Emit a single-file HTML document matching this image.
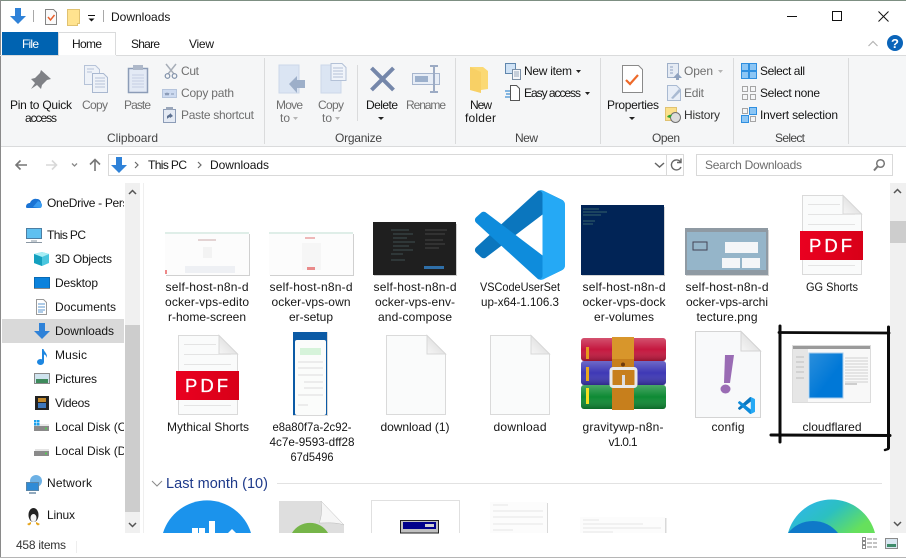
<!DOCTYPE html>
<html><head><meta charset="utf-8"><title>Downloads</title>
<style>
html,body{margin:0;padding:0;background:#fff;width:906px;height:558px;overflow:hidden}
svg{display:block;position:absolute;left:0;top:0}
text{font-family:"Liberation Sans",sans-serif;font-size:12px;fill:#151515}
.m{text-anchor:middle}
.g{fill:#6f6f6f}
.b{fill:#444}
</style></head><body>
<svg width="906" height="558" viewBox="0 0 906 558" xmlns="http://www.w3.org/2000/svg">
<defs>
<clipPath id="nav"><rect x="0" y="183" width="124" height="350"/></clipPath>
<clipPath id="main"><rect x="144" y="183" width="746" height="350"/></clipPath>
<linearGradient id="ed" x1="0" y1="0" x2="1" y2="0.5"><stop offset="0" stop-color="#2fb4f5"/><stop offset=".55" stop-color="#2cc0c0"/><stop offset="1" stop-color="#66e05c"/></linearGradient>
<linearGradient id="blue" x1="0" y1="0" x2="1" y2="1"><stop offset="0" stop-color="#2b8fdc"/><stop offset=".6" stop-color="#0078d7"/></linearGradient>
<linearGradient id="fold" x1="0" y1="1" x2="1" y2="0"><stop offset="0" stop-color="#f6f6f6"/><stop offset="1" stop-color="#d4d4d4"/></linearGradient>
<linearGradient id="red" x1="0" y1="0" x2="1" y2="0"><stop offset="0" stop-color="#ea0020"/><stop offset="1" stop-color="#d80018"/></linearGradient>
<linearGradient id="shade" x1="0" y1="0" x2="0" y2="1"><stop offset="0" stop-color="#fff" stop-opacity=".25"/><stop offset=".5" stop-color="#fff" stop-opacity="0"/><stop offset="1" stop-color="#000" stop-opacity=".25"/></linearGradient>
<g id="arrow"><path d="M5 0h6v8h5l-8 8-8-8h5z" fill="#2f82d8"/></g>
<g id="vsc">
<path d="M96.46 10.8L75.86.88C73.47-.27 70.62.21 68.75 2.08L1.3 63.58c-1.81 1.66-1.81 4.51.01 6.17l5.5 5c1.49 1.35 3.72 1.45 5.32.24L93.36 13.37C96.09 11.3 100 13.25 100 16.67v-.24c0-2.4-1.38-4.59-3.54-5.63z" fill="#0b76be"/>
<path d="M96.46 89.2L75.86 99.12c-2.39 1.15-5.24.67-7.11-1.2L1.3 36.42c-1.81-1.66-1.81-4.51.01-6.17l5.5-5c1.49-1.35 3.72-1.45 5.32-.24l81.23 61.62c2.73 2.07 6.64.12 6.64-3.3v.24c0 2.4-1.38 4.59-3.54 5.63z" fill="#0e8cdc"/>
<path d="M75.86 99.13c-2.39 1.15-5.24.66-7.11-1.21C71.06 100.22 75 98.59 75 95.33V4.67c0-3.26-3.94-4.89-6.25-2.59 1.87-1.87 4.72-2.35 7.11-1.21l20.6 9.91C98.62 11.82 100 14.01 100 16.41v67.18c0 2.4-1.38 4.59-3.54 5.63z" fill="#25a9f5"/>
</g>
<g id="doc">
<path d="M.5.5H41L59.5 19V79.5H.5z" fill="#fafbfb" stroke="#dadada"/>
<path d="M41 .5V19H59.5z" fill="url(#fold)" stroke="#d8d8d8"/>
</g>
<g id="pdf">
<use href="#doc"/>
<path d="M6 9.5h32M6 19.500h47M6 29.500h47M6 70.500h47" stroke="#e4e4e4" fill="none"/>
<rect x="-2" y="36" width="63" height="29" fill="url(#red)"/>
<text x="30" y="57" class="m" style="font-size:18.500px;fill:#fff;letter-spacing:3px;stroke:#fff;stroke-width:.3px">PDF</text>
</g>
<g id="chev"><path d="M0 0l3 3-3 3" fill="none" stroke="#6a6a6a" stroke-width="1.2"/></g>
</defs>

<!-- window frame -->
<rect width="906" height="558" fill="#fff"/>
<rect x="0" y="0" width="906" height="1" fill="#7d8f82"/>
<rect x="0" y="0" width="1" height="558" fill="#8a8a8a"/>
<rect x="0" y="557" width="906" height="1" fill="#b5b5b5"/>

<!-- title bar -->
<use href="#arrow" x="10" y="8"/>
<rect x="33" y="10" width="1" height="12" fill="#a8a8a8"/>
<path d="M45.500 9.500h8l3 3v12h-11z" fill="#fafafa" stroke="#858585"/>
<path d="M48 17l2.500 3 4-5" fill="none" stroke="#e8602c" stroke-width="1.500"/>
<path d="M67.500 9.500h12v14h-2v2h-10z" fill="#ffe38f" stroke="#e0c271"/>
<path d="M88.500 18.500h6l-3 3z" fill="#111" stroke="none"/>
<rect x="88" y="15" width="7" height="1" fill="#111"/>
<rect x="103" y="10" width="1" height="12" fill="#a8a8a8"/>
<text x="111" y="21">Downloads</text>
<rect x="787" y="16" width="10" height="1" fill="#111"/>
<rect x="832.500" y="11.500" width="9" height="9" fill="none" stroke="#111"/>
<path d="M878.500 11.500l10 10M888.500 11.500l-10 10" stroke="#111" fill="none"/>

<!-- tabs -->
<rect x="2" y="32" width="56" height="23" fill="#0063b1"/>
<text x="30.500" y="48" class="m" style="fill:#fff" textLength="17">File</text>
<rect x="0" y="55" width="906" height="1" fill="#dadbdc"/>
<path d="M58.500 55.500v-23h57v23" fill="#fff" stroke="#dadbdc"/>
<rect x="59" y="55" width="57" height="2" fill="#f5f6f7"/>
<text x="87" y="48" class="m" textLength="30">Home</text>
<text x="131" y="48" textLength="29">Share</text>
<text x="189" y="48" textLength="25">View</text>
<path d="M868.500 46l4.500-4.500 4.500 4.500" stroke="#b5b5b5" stroke-width="1.200" fill="none"/>
<circle cx="895" cy="43" r="8" fill="#0a64b9"/>
<text x="895" y="48" class="m" style="fill:#fff;font-weight:700;font-size:13px">?</text>

<!-- ribbon -->
<rect x="1" y="56" width="905" height="90" fill="#f5f6f7"/>
<rect x="1" y="146" width="905" height="1" fill="#dadbdc"/>
<g fill="#dadbdc">
<rect x="264" y="58" width="1" height="86"/><rect x="455" y="58" width="1" height="86"/><rect x="600" y="58" width="1" height="86"/><rect x="733" y="58" width="1" height="86"/><rect x="848" y="58" width="1" height="86"/><rect x="357" y="65" width="1" height="56"/>
</g>
<!-- pin -->
<path d="M41 70l10 9-4 1-5 5-1 4-4-4-6 4 4-6-4-4 4-1 5-5z" fill="#7f8186"/>
<!-- copy -->
<path d="M84.500 65.500h11l4 4v15h-15z" fill="#eef2f8" stroke="#b6c3d8"/>
<path d="M92.500 73.500h11l4 4v15h-15z" fill="#eef2f8" stroke="#a9b8d0"/>
<path d="M87 69h7M87 72h5M95 78h10M95 81h10M95 84h10M95 87h10" stroke="#b6c3d8"/>
<!-- paste -->
<rect x="128.500" y="68.500" width="19" height="24" fill="#e3eaf5" stroke="#8c9cb7" stroke-width="1.500"/>
<rect x="133" y="65" width="10" height="5" fill="#aeb8c9"/>
<path d="M132 75h12M132 78h12M132 81h12M132 84h12M132 87h12" stroke="#c4cfe2"/>
<!-- cut -->
<path d="M166 64l8 10M176 64l-8 10" stroke="#a7aeb8" stroke-width="1.500" fill="none"/>
<circle cx="167.500" cy="76" r="2.300" fill="none" stroke="#7e8fa8" stroke-width="1.200"/>
<circle cx="174.500" cy="76" r="2.300" fill="none" stroke="#7e8fa8" stroke-width="1.200"/>
<!-- copy path -->
<rect x="162.500" y="89.500" width="14" height="8" fill="#cddaf0" stroke="#b5c4dc"/>
<path d="M165 93l1 2 1-2 1 2 1-2M171 94h3" stroke="#6d7f9d" fill="none" stroke-width=".8"/>
<!-- paste shortcut -->
<rect x="163.500" y="109.500" width="12" height="13" fill="#e4eaf4" stroke="#8c9cb7"/>
<rect x="166" y="107" width="7" height="3" fill="#9aa6ba"/>
<path d="M167 119v-3l3-2v-1l3 3-3 2v-1l-2 1z" fill="#5d7191"/>
<text x="41" y="109" class="m" textLength="62">Pin to Quick</text>
<text x="41" y="122" class="m" textLength="32">access</text>
<text x="95" y="109" class="m g" textLength="26">Copy</text>
<text x="137.500" y="109" class="m g" textLength="27">Paste</text>
<text x="181" y="75" class="g" textLength="18">Cut</text>
<text x="181" y="97" class="g" textLength="53">Copy path</text>
<text x="181" y="119" class="g" textLength="73">Paste shortcut</text>
<text x="132.500" y="142" class="m b" textLength="51">Clipboard</text>

<!-- move to -->
<path d="M279 65h20v28h-20z" fill="#dbe5f3" stroke="#ccd8ea"/>
<path d="M289 84l8-8v4h8v8h-8v5z" fill="#9dafc9"/>
<text x="289.500" y="109" class="m g" textLength="27">Move</text>
<text x="280" y="122" class="g">to</text>
<path d="M293 117h5l-2.500 3z" fill="#b5b5b5"/>
<!-- copy to -->
<path d="M321 65h20v28h-20z" fill="#dbe5f3" stroke="#ccd8ea"/>
<path d="M331 63.500h11l4 4v13h-15z" fill="#f0f4fa" stroke="#b3c1d7"/>
<path d="M333 68h10M333 71h10M333 74h10M333 77h10" stroke="#b3c1d7"/>
<text x="331" y="109" class="m g" textLength="26">Copy</text>
<text x="322" y="122" class="g">to</text>
<path d="M335 117h5l-2.500 3z" fill="#b5b5b5"/>
<!-- delete -->
<path d="M371.500 68l22 22M393.500 68l-22 22" stroke="#7587aa" stroke-width="4" fill="none"/>
<text x="382" y="109" class="m" textLength="32">Delete</text>
<path d="M378 117h6l-3 3z" fill="#222"/>
<!-- rename -->
<rect x="412.500" y="73.500" width="27" height="11" fill="#e7edf6" stroke="#a6b5cd"/>
<rect x="415" y="76" width="13" height="6" fill="#9cb0cc"/>
<path d="M430 66h8M434 66v26M430 92h8" stroke="#9cabc4" stroke-width="2" fill="none"/>
<text x="426" y="109" class="m g" textLength="40">Rename</text>
<text x="358.500" y="142" class="m b" textLength="47">Organize</text>

<!-- new folder -->
<path d="M470 67h13l5 4v18l-7 1v3l-11-3z" fill="#fbd974"/>
<path d="M470 67l11 5v21l-11-3z" fill="#f7c95c" opacity=".6"/>
<text x="481" y="109" class="m" textLength="22">New</text>
<text x="480.500" y="122" class="m" textLength="31">folder</text>
<!-- new item -->
<rect x="505.500" y="63.500" width="10" height="10" fill="#cfe2f5" stroke="#5f86ad"/>
<rect x="512.500" y="69.500" width="8" height="10" fill="#f4f6fa" stroke="#7b8fa6"/>
<path d="M514 72h5M514 74h5M514 76h5" stroke="#96a7bb"/>
<text x="524" y="75" textLength="48">New item</text>
<path d="M576 70h5l-2.500 3z" fill="#222"/>
<!-- easy access -->
<path d="M510.500 85.500h6l3 3v12h-9z" fill="#fff" stroke="#555"/>
<path d="M505 91h5M506 94h4M505 97h5" stroke="#1577c9"/>
<text x="524" y="97" textLength="57">Easy access</text>
<path d="M585 92h5l-2.500 3z" fill="#222"/>
<text x="526.500" y="142" class="m b" textLength="23">New</text>

<!-- properties -->
<path d="M622.500 65.500h16l4 4v23h-20z" fill="#fff" stroke="#8a8a8a"/>
<path d="M626 80l4 4 8-9" fill="none" stroke="#ee6a2a" stroke-width="2.200"/>
<text x="633" y="109" class="m" textLength="52">Properties</text>
<path d="M629 117h6l-3 3z" fill="#222"/>
<!-- open -->
<rect x="667.500" y="63.500" width="11" height="14" fill="#e5ebf4" stroke="#9fb0c9"/>
<path d="M670 67h3M670 70h3M670 73h3" stroke="#8fa2bf"/>
<path d="M673 78l4.500-5 4.500 5h-3v2h-3v-2z" fill="#8fa2bf"/>
<text x="684" y="75" class="g" textLength="29">Open</text>
<path d="M718 70h5l-2.500 3z" fill="#b5b5b5"/>
<!-- edit -->
<path d="M667.500 85.500h9l4 4v11h-13z" fill="#e8eef7" stroke="#a9bad2"/>
<path d="M671 98l8-9 2 2-8 8z" fill="#a9bad2"/>
<text x="684" y="97" class="g" textLength="20">Edit</text>
<!-- history -->
<rect x="665.500" y="107.500" width="11" height="13" fill="#fbe08b" stroke="#e0c271"/>
<circle cx="675.500" cy="117.500" r="5" fill="#dcdcdc" stroke="#707070"/>
<path d="M667 117a4 4 0 0 1 5-2l-2 3z" fill="#2fa52f"/>
<text x="684" y="119" style="fill:#333" textLength="36">History</text>
<text x="666" y="142" class="m b" textLength="28">Open</text>

<!-- select -->
<g fill="#8cc6f5" stroke="#2f8fe0">
<rect x="741.500" y="63.500" width="7" height="7"/><rect x="749.500" y="63.500" width="7" height="7"/><rect x="741.500" y="71.500" width="7" height="7"/><rect x="749.500" y="71.500" width="7" height="7"/>
</g>
<g fill="none" stroke="#a5a5a5">
<rect x="742.500" y="86.500" width="5" height="5"/><rect x="750.500" y="86.500" width="5" height="5"/><rect x="742.500" y="94.500" width="5" height="5"/><rect x="750.500" y="94.500" width="5" height="5"/>
<rect x="742.500" y="108.500" width="5" height="5"/><rect x="750.500" y="116.500" width="5" height="5"/>
</g>
<g fill="#8cc6f5" stroke="#2f8fe0">
<rect x="749.500" y="107.500" width="7" height="7"/><rect x="741.500" y="115.500" width="7" height="7"/>
</g>
<text x="760" y="75" textLength="45">Select all</text>
<text x="760" y="97" textLength="60">Select none</text>
<text x="760" y="119" textLength="78">Invert selection</text>
<text x="790" y="142" class="m b" textLength="30">Select</text>

<!-- nav row -->
<path d="M27 165H16M20.500 160.500L16 165l4.500 4.500" fill="none" stroke="#777" stroke-width="1.600"/>
<path d="M46 165h10M52 160.500l4.500 4.500-4.500 4.500" fill="none" stroke="#d8d8d8" stroke-width="1.600"/>
<path d="M72 163.500l2.500 2.500 2.500-2.500" fill="none" stroke="#888" stroke-width="1.300"/>
<path d="M95 171v-11M90 164.500l5-5 5 5" fill="none" stroke="#777" stroke-width="1.600"/>
<rect x="108.500" y="154.500" width="575" height="21" fill="#fff" stroke="#d9d9d9"/>
<rect x="666" y="155" width="1" height="20" fill="#d9d9d9"/>
<use href="#arrow" x="111" y="157"/>
<use href="#chev" x="135" y="162"/>
<text x="148" y="169" textLength="39">This PC</text>
<use href="#chev" x="198" y="162"/>
<text x="210" y="169" textLength="59">Downloads</text>
<path d="M655 163l4.500 4 4.500-4" fill="none" stroke="#666" stroke-width="1.500"/>
<path d="M680.500 162a5 5 0 1 0 .5 5M681 158.500v4h-4" fill="none" stroke="#666" stroke-width="1.400"/>
<rect x="696.500" y="154.500" width="196" height="21" fill="#fff" stroke="#d9d9d9"/>
<text x="705" y="169" style="fill:#6d6d6d" textLength="97">Search Downloads</text>
<circle cx="880.500" cy="163.500" r="3.800" fill="none" stroke="#777" stroke-width="1.500"/>
<path d="M877.500 166.500l-3.500 4" stroke="#777" stroke-width="2" fill="none"/>

<!-- nav pane -->
<rect x="2" y="319" width="122" height="24" fill="#d9d9d9"/>
<rect x="125" y="183" width="15" height="350" fill="#f0f0f0"/>
<rect x="125" y="325" width="15" height="187" fill="#cdcdcd"/>
<path d="M129 194l3.500-3.500 3.500 3.500" fill="none" stroke="#555" stroke-width="1.500"/>
<path d="M129 523l3.500 3.500 3.500-3.500" fill="none" stroke="#555" stroke-width="1.500"/>
<rect x="143" y="183" width="1" height="350" fill="#efefef"/>

<!-- onedrive -->
<path d="M26 207c0-3 2-4 4-4 1-3 4-5 7-4 2 0 3 1 4 3 0 0 1 6-1 6H28c-1 0-2 0-2-1z" fill="#1a73d4"/>
<path d="M33 207l5-6c2 1 4 2 4 4s-1 3-2 3z" fill="#3a9cf0"/>
<!-- this pc -->
<rect x="26.500" y="228.500" width="15" height="10" fill="#5fc0f0" stroke="#4c7ea3"/>
<path d="M31 241h6M26 242.500h16" stroke="#8a97a3"/>
<!-- 3d -->
<g transform="translate(-7 0)">
<path d="M41 254l8-2 7 2v9l-7 3-8-3z" fill="#49c6de"/>
<path d="M41 254l8 3 7-3-7-2z" fill="#a8eef5"/>
<path d="M49 257v9l-8-3v-9z" fill="#14a0bf"/>
</g>
<!-- desktop -->
<rect x="34.500" y="277.500" width="15" height="11" fill="#0b82dc" stroke="#076ab5"/>
<rect x="34" y="288" width="16" height="1" fill="#888"/>
<!-- documents -->
<path d="M36.500 299.500h7l3 3v12h-10z" fill="#fff" stroke="#999"/>
<path d="M38 304h7M38 307h7M38 310h7M38 312h5" stroke="#5d97cf"/>
<!-- downloads -->
<use href="#arrow" x="34" y="323"/>
<!-- music -->
<ellipse cx="40.500" cy="362" rx="3.500" ry="3" fill="#1d86e0"/>
<path d="M42 362v-13h1.500c.5 3 4 4 3.500 9-.5-2-2-3.500-3-3.500v7.500z" fill="#1d86e0"/>
<!-- pictures -->
<rect x="34.500" y="373.500" width="15" height="10" fill="#cfe3ee" stroke="#8a8a8a"/>
<rect x="36" y="379" width="12" height="4" fill="#3e8a5c"/>
<!-- videos -->
<rect x="35" y="396" width="14" height="14" fill="#222"/>
<rect x="38" y="398" width="8" height="4" fill="#c38a2e"/>
<rect x="38" y="403" width="8" height="5" fill="#3d77bd"/>
<!-- disk c -->
<rect x="34" y="424" width="15" height="6" fill="#e8e8e8"/>
<rect x="34" y="426" width="15" height="5" fill="#8a8a8a"/>
<circle cx="46" cy="428.500" r="1" fill="#4ed44e"/>
<g fill="#1aa1ee"><rect x="34" y="420" width="2.500" height="2.500"/><rect x="37" y="420" width="2.500" height="2.500"/><rect x="37" y="423" width="2.500" height="2.500"/><rect x="34" y="423" width="2.500" height="2.500"/></g>
<!-- disk d -->
<rect x="35" y="449" width="14" height="3" fill="#e4e4e4"/>
<rect x="34" y="451" width="15" height="5" fill="#8a8a8a"/>
<circle cx="46" cy="453.500" r="1" fill="#4ed44e"/>
<!-- network -->
<circle cx="36" cy="481" r="6" fill="#6db1e5"/>
<rect x="26.500" y="482.500" width="12" height="8" fill="#2f8bd6" stroke="#5885a8"/>
<path d="M29 493h7" stroke="#6e8ea8" stroke-width="1.500"/>
<!-- linux -->
<ellipse cx="33.500" cy="515" rx="5" ry="7" fill="#222"/>
<ellipse cx="33.500" cy="518" rx="3" ry="4" fill="#f4f4f4"/>
<path d="M27 524l4-2v2l-2 1.500zM40 524l-4-2v2l2 1.500z" fill="#e6a51c"/>

<g clip-path="url(#nav)">
<text x="47" y="207" textLength="103">OneDrive - Personal</text>
<text x="47" y="239" textLength="39">This PC</text>
<text x="55" y="263" textLength="57">3D Objects</text>
<text x="55" y="287" textLength="43">Desktop</text>
<text x="55" y="311" textLength="61">Documents</text>
<text x="55" y="335" textLength="59">Downloads</text>
<text x="55" y="359" textLength="32">Music</text>
<text x="55" y="383" textLength="42">Pictures</text>
<text x="55" y="407" textLength="35">Videos</text>
<text x="55" y="431">Local Disk (C:)</text>
<text x="55" y="455">Local Disk (D:)</text>
<text x="47" y="487" textLength="45">Network</text>
<text x="47" y="519" textLength="28">Linux</text>
</g>

<!-- status -->
<text x="16" y="549" style="fill:#333" textLength="50">458 items</text>
<rect x="76" y="541" width="1" height="12" fill="#eeeeee"/>
<g fill="none" stroke="#8a8a8a">
<rect x="862.500" y="537.500" width="3" height="3"/><rect x="862.500" y="541.500" width="3" height="3"/><rect x="862.500" y="545.500" width="3" height="3"/>
<path d="M867 539h5M873 539h4M867 543h5M873 543h4M867 547h5M873 547h4"/>
<rect x="885.500" y="538.500" width="12" height="10" fill="#d9e7f1"/>
</g>
<rect x="887" y="544" width="9" height="3" fill="#3f8c6b"/>

<!-- main scrollbar -->
<rect x="890" y="183" width="16" height="350" fill="#f0f0f0"/>
<rect x="890" y="221" width="16" height="22" fill="#cdcdcd"/>
<path d="M894 193l3.500-3.500 3.500 3.500" fill="none" stroke="#555" stroke-width="1.500"/>
<path d="M894 522l3.500 3.500 3.500-3.500" fill="none" stroke="#555" stroke-width="1.500"/>

<!-- Row 1 thumbnails -->
<rect x="166" y="234" width="84" height="42" fill="#d0d0d0"/>
<rect x="165" y="232" width="84" height="43" fill="#fcfcfc"/>
<rect x="165" y="232" width="84" height="2" fill="#dfeee8"/>
<rect x="198" y="239" width="18" height="2" fill="#e3d3d3"/>
<rect x="203" y="247" width="9" height="11" fill="#f3f3f3"/>
<rect x="185" y="266" width="50" height="7" fill="#eef0f4"/>
<rect x="165" y="270" width="2" height="4" fill="#e88"/>

<rect x="270" y="234" width="84" height="42" fill="#d0d0d0"/>
<rect x="269" y="232" width="84" height="43" fill="#fcfcfc"/>
<rect x="269" y="232" width="84" height="2" fill="#dfeee8"/>
<rect x="305" y="237" width="10" height="2" fill="#eeb8b8"/>
<rect x="302" y="243" width="19" height="27" fill="#f6f6f6"/>
<rect x="307" y="267" width="8" height="3" fill="#e98a8a"/>

<rect x="374" y="224" width="83" height="52" fill="#cfcfcf"/>
<rect x="373" y="222" width="83" height="53" fill="#1f1f1f"/>
<path d="M391 230h18M393 234h20M393 238h14M393 242h22M393 246h16M393 250h20M391 254h12M391 260h14" stroke="#3f4f52"/>
<path d="M425 230h22M425 234h20M425 240h18M425 244h20M425 248h14" stroke="#454545"/>
<rect x="424" y="266" width="20" height="3" fill="#2f6fa8"/>

<use href="#vsc" transform="translate(475 190) scale(.9)"/>

<rect x="582" y="207" width="83" height="69" fill="#d6d6d6"/>
<rect x="581" y="205" width="83" height="70" fill="#012456"/>
<path d="M583 209h16M583 212h24M583 215h18M583 221h12M583 224h10" stroke="#35626b"/>

<rect x="686" y="230" width="83" height="46" fill="#d6d6d6"/>
<rect x="685" y="228" width="83" height="47" fill="#8f9aa3"/>
<rect x="687" y="232" width="79" height="38" fill="#95b5c9"/>
<rect x="725" y="242" width="33" height="11" fill="#f4f6f8"/>
<rect x="722" y="258" width="18" height="10" fill="#f4f6f8"/>
<rect x="742" y="258" width="18" height="10" fill="#f4f6f8"/>
<rect x="693" y="242" width="14" height="8" fill="none" stroke="#445"/>

<use href="#pdf" x="802" y="195"/>

<text x="207" y="291" class="m" textLength="83">self-host-n8n-d</text>
<text x="207" y="306" class="m" textLength="84">ocker-vps-edito</text>
<text x="207" y="321" class="m" textLength="78">r-home-screen</text>
<text x="311" y="291" class="m" textLength="83">self-host-n8n-d</text>
<text x="311" y="306" class="m" textLength="79">ocker-vps-own</text>
<text x="311" y="321" class="m" textLength="44">er-setup</text>
<text x="415" y="291" class="m" textLength="83">self-host-n8n-d</text>
<text x="415" y="306" class="m" textLength="80">ocker-vps-env-</text>
<text x="415" y="321" class="m" textLength="74">and-compose</text>
<text x="520" y="291" class="m" textLength="80" lengthAdjust="spacingAndGlyphs">VSCodeUserSet</text>
<text x="520" y="306" class="m" textLength="78" lengthAdjust="spacingAndGlyphs">up-x64-1.106.3</text>
<text x="624" y="291" class="m" textLength="83">self-host-n8n-d</text>
<text x="624" y="306" class="m" textLength="83">ocker-vps-dock</text>
<text x="624" y="321" class="m" textLength="60">er-volumes</text>
<text x="727" y="291" class="m" textLength="83">self-host-n8n-d</text>
<text x="727" y="306" class="m" textLength="82">ocker-vps-archi</text>
<text x="727" y="321" class="m" textLength="61">tecture.png</text>
<text x="832" y="291" class="m" textLength="52" lengthAdjust="spacingAndGlyphs">GG Shorts</text>

<!-- Row 2 -->
<use href="#pdf" x="178" y="335"/>
<rect x="293" y="332" width="35" height="84" fill="#d8d8d8"/>
<rect x="293" y="332" width="34" height="83" fill="#0b5aa5"/>
<rect x="295" y="340" width="31" height="75" rx="2" fill="#fbfcfb"/>
<rect x="300" y="348" width="21" height="7" fill="#d6f3da"/>
<path d="M298 362h25M298 368h25M298 375h25M304 382h19M304 388h19M298 395h25M298 405h10" stroke="#dcdcdc"/>
<use href="#doc" x="386" y="335"/>
<use href="#doc" x="490" y="335"/>

<!-- rar -->
<rect x="581" y="338" width="85" height="23" rx="3" fill="#c5183f"/>
<rect x="581" y="361" width="85" height="24" rx="3" fill="#3e38b5"/>
<rect x="581" y="385" width="85" height="24" rx="3" fill="#0e8a34"/>
<rect x="581" y="338" width="85" height="23" rx="3" fill="url(#shade)"/>
<rect x="581" y="361" width="85" height="24" rx="3" fill="url(#shade)"/>
<rect x="581" y="385" width="85" height="24" rx="3" fill="url(#shade)"/>
<rect x="586" y="347" width="3" height="12" fill="#e89a1e"/>
<rect x="586" y="367" width="3" height="14" fill="#e8a81e"/>
<rect x="586" y="388" width="3" height="16" fill="#f5e020"/>
<rect x="612" y="337" width="22" height="73" fill="#c77f1c"/>
<rect x="612" y="337" width="22" height="22" fill="#d8962b"/>
<rect x="611" y="368.500" width="25" height="18" rx="2" fill="#c77f1c" stroke="#e8e8e8" stroke-width="3"/>
<rect x="622" y="375" width="3" height="10" fill="#ddd"/>
<circle cx="623" cy="364.500" r="2" fill="#6e3a0c"/>

<!-- config -->
<path d="M695.500 331.500H741L760.500 351V417.500H695.500z" fill="#f8f9fa" stroke="#d4d4d4"/>
<path d="M741 331.500V351H760.500z" fill="url(#fold)" stroke="#d4d4d4"/>
<path d="M725 355h9l-4 28h-6z" fill="#9a6cb4"/>
<ellipse cx="725.500" cy="389" rx="5" ry="4.500" fill="#9a6cb4"/>
<use href="#vsc" transform="translate(738 397) scale(.17)"/>

<!-- cloudflared -->
<rect x="792.500" y="345.500" width="78" height="57" fill="#f8f8f8" stroke="#dcdcdc"/>
<rect x="793" y="346" width="77" height="3" fill="#9a9a9a"/>
<rect x="793" y="349" width="15" height="53" fill="#e6e6e6"/>
<path d="M796 357h8M796 362h8M796 367h8M796 372h8M796 378h8" stroke="#bdbdbd"/>
<rect x="809" y="353" width="34" height="45" fill="url(#blue)" stroke="#a8cdec"/>
<path d="M845 358h23M845 361h23M845 364h23M845 367h23M845 370h23M845 373h23M845 376h23M845 379h23M845 382h23" stroke="#cfcfcf"/>
<path d="M845 384h12" stroke="#a5a5a5"/>

<!-- hand-drawn box -->
<g fill="none" stroke="#0b0b0b" stroke-linecap="round">
<path d="M779 332.500L889 333" stroke-width="2.800"/>
<path d="M780 326V442" stroke-width="3"/>
<path d="M888.500 327V448" stroke-width="3"/>
<path d="M771 435L890 435.500" stroke-width="3"/>
<path d="M885 450L888 449" stroke-width="2.500"/>
</g>

<text x="208" y="431" class="m" textLength="82">Mythical Shorts</text>
<text x="312" y="431" class="m" textLength="79" lengthAdjust="spacingAndGlyphs">e8a80f7a-2c92-</text>
<text x="312" y="446" class="m" textLength="85" lengthAdjust="spacingAndGlyphs">4c7e-9593-dff28</text>
<text x="312" y="461" class="m" textLength="43" lengthAdjust="spacingAndGlyphs">67d5496</text>
<text x="415" y="431" class="m" textLength="69">download (1)</text>
<text x="520" y="431" class="m" textLength="53">download</text>
<text x="623" y="431" class="m" textLength="81">gravitywp-n8n-</text>
<text x="623" y="446" class="m" textLength="29">v1.0.1</text>
<text x="728" y="431" class="m" textLength="33">config</text>
<text x="832" y="431" class="m" textLength="59">cloudflared</text>

<!-- group header -->
<path d="M152 481l5 5 5-5" fill="none" stroke="#8a8a8a"/>
<text x="166" y="488" textLength="102" style="font-size:14.500px;fill:#1e3a8a">Last month (10)</text>
<rect x="277" y="483" width="605" height="1" fill="#e2e2e2"/>

<!-- Row 3 (cut off by the status bar at y=533) -->
<path d="M163 533A46 46 0 0 1 251 533Z" fill="#1b93ec"/>
<g fill="#fff"><rect x="192" y="528" width="6" height="5"/><rect x="199" y="528" width="6" height="5"/><rect x="209" y="521" width="6" height="12"/><path d="M232 529l4 4h-8z"/></g>
<path d="M279 501h42l23 24v8h-65z" fill="#dedede"/>
<path d="M321 501l23 24c-8-3-18-2-25-2 3-6 3-16 2-22z" fill="#f6f6f6" stroke="#bbb" stroke-width=".5"/>
<path d="M292 533A21 21 0 0 1 328 533Z" fill="#76b549"/>
<path d="M371.500 533V500.500H459.500V533" fill="#fff" stroke="#e0e0e0"/>
<rect x="400.500" y="520.500" width="38" height="12.500" fill="#c0c0c0" stroke="#222"/>
<rect x="403" y="522" width="33" height="7" fill="#00008b"/>
<rect x="425" y="524" width="9" height="3" fill="#cfcfcf"/>
<rect x="547" y="503" width="1" height="30" fill="#d9d9d9"/>
<rect x="490" y="502" width="57" height="31" fill="#fcfcfc"/>
<path d="M493 505h15M493 511h50M493 517h50M493 524h50M493 530h20" stroke="#e6e6e6"/>
<rect x="665" y="518" width="1.500" height="15" fill="#d9d9d9"/>
<rect x="580" y="517" width="85" height="16" fill="#fcfcfc"/>
<path d="M583 520h16M583 524h60M583 528h78M583 532h30" stroke="#e6e6e6"/>
<path d="M788 533A45 45 0 0 1 875 533Z" fill="url(#ed)"/>
<path d="M788 533A32 32 0 0 1 838 533Z" fill="#0f79c9"/>
</svg>
</body></html>
